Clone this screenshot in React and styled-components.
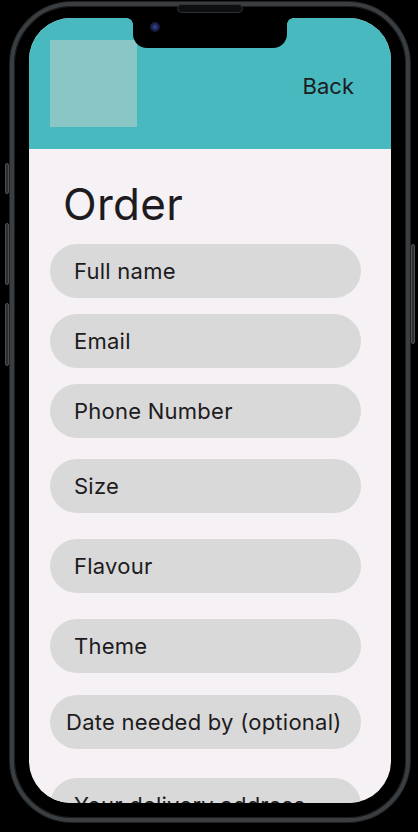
import React from "react";
import styled, { createGlobalStyle } from "styled-components";

const GlobalStyle = createGlobalStyle`
  html, body {
    margin: 0;
    padding: 0;
    background: #000;
    overflow: hidden;
  }
  body {
    font-family: Inter, "Noto Sans", sans-serif;
    color: #1d1b20;
  }
`;

const Page = styled.div`
  width: 418px;
  height: 832px;
  background: #000;
  padding: 2px 0 0 10px;
  box-sizing: border-box;
`;

const Device = styled.div`
  position: relative;
  width: 400px;
  height: 820px;
`;

const Frame = styled.div`
  box-sizing: border-box;
  width: 100%;
  height: 100%;
  padding: 12px 15px 15px 15px;
  background: #000;
  border: 4px solid #3a3e41;
  border-radius: 62px;
  box-shadow: 0 0 0 1px #1e2123, inset 0 0 0 1px #1b1e20;
`;

const SideButton = styled.div`
  position: absolute;
  top: ${({ top }) => top}px;
  height: ${({ height }) => height}px;
  ${({ right }) => (right ? "right: -5px;" : "left: -5px;")}
  width: 4px;
  background: #2c3033;
  border: 1px solid #4a4f52;
  border-radius: 2px;
  box-sizing: border-box;
`;

const Speaker = styled.div`
  position: absolute;
  left: 167px;
  top: 2px;
  width: 66px;
  height: 9px;
  background: #0e0f10;
  border: 1px solid #2f3336;
  border-radius: 5px;
  box-sizing: border-box;
`;

const Screen = styled.div`
  position: relative;
  height: 100%;
  border-radius: 42px;
  overflow: hidden;
  background: #f5f1f4;
  display: flex;
  flex-direction: column;
`;

const Notch = styled.div`
  position: absolute;
  left: 104px;
  top: 0;
  width: 154px;
  height: 30px;
  background: #000;
  border-radius: 0 0 14px 14px;

  &::before,
  &::after {
    content: "";
    position: absolute;
    top: 0;
    width: 6px;
    height: 6px;
  }
  &::before {
    left: -6px;
    background: radial-gradient(circle at 0 6px, transparent 5.5px, #000 6px);
  }
  &::after {
    right: -6px;
    background: radial-gradient(circle at 6px 6px, transparent 5.5px, #000 6px);
  }
`;

const Camera = styled.div`
  position: absolute;
  left: 17px;
  top: 4px;
  width: 10px;
  height: 10px;
  border-radius: 50%;
  background: radial-gradient(circle at 50% 50%, #3b4a9c 0, #1b2150 45%, #0b0d18 100%);
`;

const Header = styled.header`
  height: 131px;
  flex-shrink: 0;
  background: #47b9bf;
  display: flex;
  align-items: center;
  justify-content: space-between;
  padding: 0 37px 0 21px;
`;

const Logo = styled.div`
  width: 87px;
  height: 87px;
  background: #8bc6c7;
`;

const BackLink = styled.a`
  font-size: 22px;
  color: #1d1b20;
  margin-top: 4px;
  text-decoration: none;
`;

const Body = styled.main`
  display: flex;
  flex-direction: column;
  padding: 29px 30px 0 21px;
`;

const Title = styled.h1`
  margin: 0 0 14px 13px;
  font-size: 44px;
  line-height: 52px;
  font-weight: 400;
  letter-spacing: 0.3px;
  color: #1d1b20;
`;

const Field = styled.div`
  flex-shrink: 0;
  height: 54px;
  margin-top: ${({ gap }) => gap}px;
  padding-left: ${({ inset }) => inset}px;
  border-radius: 27px;
  background: #d9d9d9;
  display: flex;
  align-items: center;
  font-size: 22px;
  letter-spacing: 0.25px;
  color: #1d1b20;
  white-space: nowrap;
`;

const fields = [
  { label: "Full name", gap: 0 },
  { label: "Email", gap: 16 },
  { label: "Phone Number", gap: 16 },
  { label: "Size", gap: 21 },
  { label: "Flavour", gap: 26 },
  { label: "Theme", gap: 26 },
  { label: "Date needed by (optional)", gap: 22, inset: 16 },
  { label: "Your delivery address", gap: 29 },
];

const App = () => (
  <>
    <GlobalStyle />
    <Page>
      <Device>
        <Frame>
          <Screen>
            <Header>
              <Logo />
              <BackLink>Back</BackLink>
            </Header>
            <Body>
              <Title>Order</Title>
              {fields.map((f) => (
                <Field key={f.label} gap={f.gap} inset={f.inset || 24}>
                  {f.label}
                </Field>
              ))}
            </Body>
            <Notch>
              <Camera />
            </Notch>
          </Screen>
        </Frame>
        <Speaker />
        <SideButton top={161} height={31} />
        <SideButton top={221} height={62} />
        <SideButton top={301} height={63} />
        <SideButton right top={242} height={100} />
      </Device>
    </Page>
  </>
);

export default App;
